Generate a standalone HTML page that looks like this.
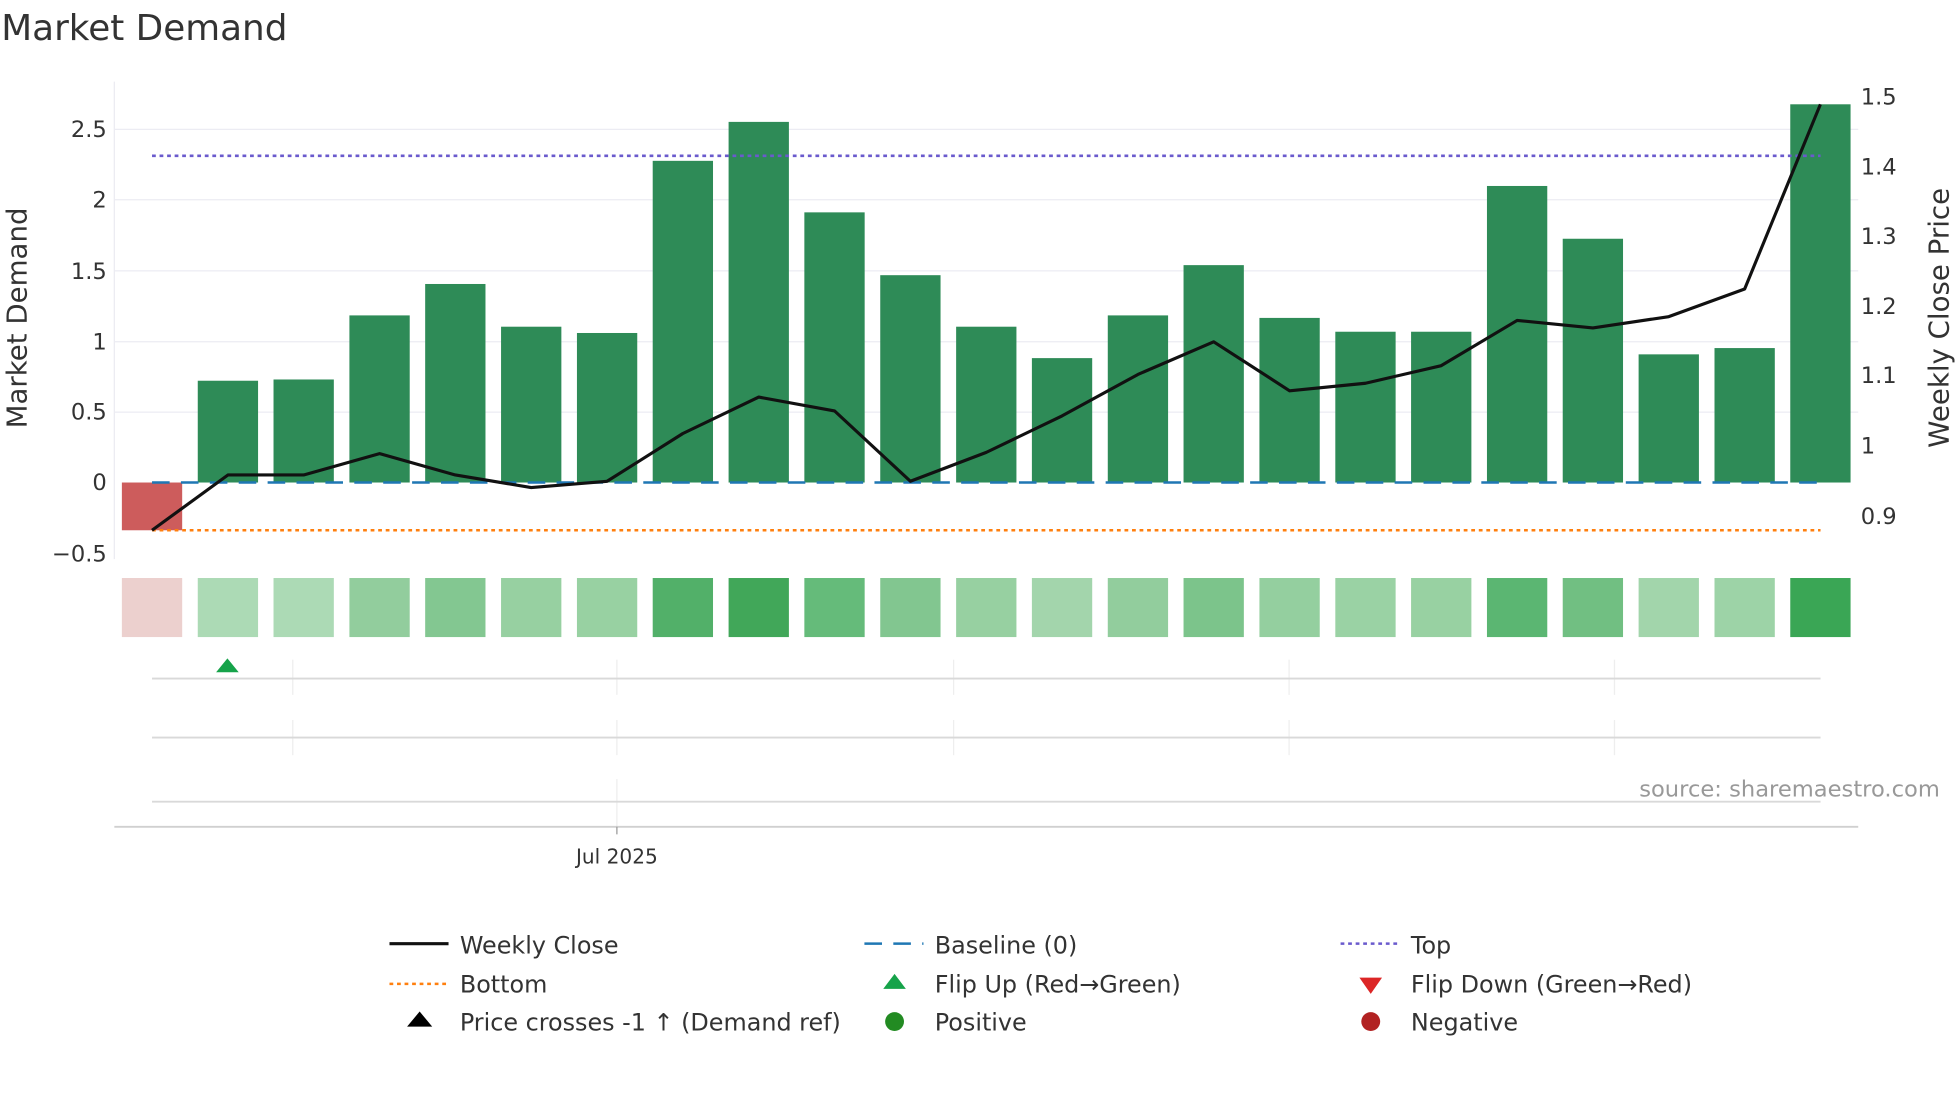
<!DOCTYPE html>
<html><head><meta charset="utf-8"><style>
html,body{margin:0;padding:0;background:#fff;}
svg{display:block;}
text{font-family:"DejaVu Sans","Liberation Sans",sans-serif;fill:#333;}
</style></head><body>
<svg width="1960" height="1102" viewBox="0 0 1560 877" preserveAspectRatio="none" xmlns="http://www.w3.org/2000/svg">
<text x="1" y="32" font-size="28.5">Market Demand</text>
<line x1="91" y1="65" x2="91" y2="445" stroke="#ebebf2" stroke-width="1"/>
<g stroke="#ececf3" stroke-width="1">
<line x1="91" y1="103" x2="1479" y2="103"/>
<line x1="91" y1="159" x2="1479" y2="159"/>
<line x1="91" y1="215.6" x2="1479" y2="215.6"/>
<line x1="91" y1="272" x2="1479" y2="272"/>
<line x1="91" y1="328" x2="1479" y2="328"/>
</g>
<g font-size="18" text-anchor="end">
<text x="85" y="109">2.5</text>
<text x="85" y="165">2</text>
<text x="85" y="222">1.5</text>
<text x="85" y="278">1</text>
<text x="85" y="334">0.5</text>
<text x="85" y="390">0</text>
<text x="85" y="447">−0.5</text>
</g>
<g font-size="18">
<text x="1481" y="83">1.5</text>
<text x="1481" y="139">1.4</text>
<text x="1481" y="194">1.3</text>
<text x="1481" y="250">1.2</text>
<text x="1481" y="305">1.1</text>
<text x="1481" y="361">1</text>
<text x="1481" y="417">0.9</text>
</g>
<text transform="translate(21,253) rotate(-90)" font-size="22" text-anchor="middle">Market Demand</text>
<text transform="translate(1551,253) rotate(-90)" font-size="22" text-anchor="middle">Weekly Close Price</text>
<g fill="#2e8b57">
<rect x="97" y="384" width="48" height="38" fill="#cd5c5c"/>
<rect x="157.4" y="303" width="48" height="81"/>
<rect x="217.7" y="302" width="48" height="82"/>
<rect x="278.1" y="251" width="48" height="133"/>
<rect x="338.4" y="226" width="48" height="158"/>
<rect x="398.8" y="260" width="48" height="124"/>
<rect x="459.2" y="265" width="48" height="119"/>
<rect x="519.5" y="128" width="48" height="256"/>
<rect x="579.9" y="97" width="48" height="287"/>
<rect x="640.2" y="169" width="48" height="215"/>
<rect x="700.6" y="219" width="48" height="165"/>
<rect x="761" y="260" width="48" height="124"/>
<rect x="821.3" y="285" width="48" height="99"/>
<rect x="881.7" y="251" width="48" height="133"/>
<rect x="942" y="211" width="48" height="173"/>
<rect x="1002.4" y="253" width="48" height="131"/>
<rect x="1062.8" y="264" width="48" height="120"/>
<rect x="1123.1" y="264" width="48" height="120"/>
<rect x="1183.5" y="148" width="48" height="236"/>
<rect x="1243.8" y="190" width="48" height="194"/>
<rect x="1304.2" y="282" width="48" height="102"/>
<rect x="1364.6" y="277" width="48" height="107"/>
<rect x="1424.9" y="83" width="48" height="301"/>
</g>
<line x1="121" y1="384" x2="1449" y2="384" stroke="#1f77b4" stroke-width="2" stroke-dasharray="14,9"/>
<line x1="121" y1="124" x2="1449" y2="124" stroke="#6a5acd" stroke-width="2" stroke-dasharray="3,3"/>
<line x1="121" y1="422" x2="1449" y2="422" stroke="#ff7f0e" stroke-width="2" stroke-dasharray="3,3"/>
<polyline fill="none" stroke="#111" stroke-width="2.5" stroke-linejoin="round" points="121,422 181.4,378 241.7,378 302.1,361 362.4,378 422.8,388 483.2,383 543.5,345 603.9,316 664.2,327 724.6,383 785,360 845.3,331 905.7,298 966,272 1026.4,311 1086.8,305 1147.1,291 1207.5,255 1267.8,261 1328.2,252 1388.6,230 1448.9,83"/>
<g>
<rect x="97" y="460" width="48" height="47" fill="#ecd0ce"/>
<rect x="157.4" y="460" width="48" height="47" fill="#acdab5"/>
<rect x="217.7" y="460" width="48" height="47" fill="#acdab5"/>
<rect x="278.1" y="460" width="48" height="47" fill="#92cd9d"/>
<rect x="338.4" y="460" width="48" height="47" fill="#83c791"/>
<rect x="398.8" y="460" width="48" height="47" fill="#97d0a1"/>
<rect x="459.2" y="460" width="48" height="47" fill="#98d1a2"/>
<rect x="519.5" y="460" width="48" height="47" fill="#52b069"/>
<rect x="579.9" y="460" width="48" height="47" fill="#41a759"/>
<rect x="640.2" y="460" width="48" height="47" fill="#65bb7a"/>
<rect x="700.6" y="460" width="48" height="47" fill="#82c690"/>
<rect x="761" y="460" width="48" height="47" fill="#97d0a1"/>
<rect x="821.3" y="460" width="48" height="47" fill="#a3d5ac"/>
<rect x="881.7" y="460" width="48" height="47" fill="#92cd9d"/>
<rect x="942" y="460" width="48" height="47" fill="#7cc48b"/>
<rect x="1002.4" y="460" width="48" height="47" fill="#94cf9f"/>
<rect x="1062.8" y="460" width="48" height="47" fill="#9ad2a4"/>
<rect x="1123.1" y="460" width="48" height="47" fill="#98d1a2"/>
<rect x="1183.5" y="460" width="48" height="47" fill="#5bb672"/>
<rect x="1243.8" y="460" width="48" height="47" fill="#71bf82"/>
<rect x="1304.2" y="460" width="48" height="47" fill="#a2d5ab"/>
<rect x="1364.6" y="460" width="48" height="47" fill="#9dd3a7"/>
<rect x="1424.9" y="460" width="48" height="47" fill="#3aa655"/>
</g>
<g stroke="#eeeeee" stroke-width="1">
<line x1="233" y1="525" x2="233" y2="553"/><line x1="491" y1="525" x2="491" y2="553"/><line x1="759" y1="525" x2="759" y2="553"/><line x1="1026" y1="525" x2="1026" y2="553"/><line x1="1285" y1="525" x2="1285" y2="553"/>
<line x1="233" y1="573" x2="233" y2="601"/><line x1="491" y1="573" x2="491" y2="601"/><line x1="759" y1="573" x2="759" y2="601"/><line x1="1026" y1="573" x2="1026" y2="601"/><line x1="1285" y1="573" x2="1285" y2="601"/>
<line x1="491" y1="620" x2="491" y2="658"/>
</g>
<g stroke="#d9d9d9" stroke-width="1.5">
<line x1="121" y1="540" x2="1449" y2="540"/>
<line x1="121" y1="587" x2="1449" y2="587"/>
<line x1="121" y1="638" x2="1449" y2="638"/>
</g>
<line x1="91" y1="658" x2="1479" y2="658" stroke="#d0d0d0" stroke-width="1.5"/>
<line x1="491" y1="658" x2="491" y2="664" stroke="#999" stroke-width="1"/>
<polygon points="181,524 172,535 190,535" fill="#16a34a"/>
<text x="491" y="687" font-size="16" text-anchor="middle">Jul 2025</text>
<text x="1544" y="634" font-size="18" text-anchor="end" style="fill:#999">source: sharemaestro.com</text>
<g font-size="19">
<line x1="310" y1="751" x2="357" y2="751" stroke="#111" stroke-width="2.5"/>
<text x="366" y="759">Weekly Close</text>
<line x1="310" y1="783" x2="357" y2="783" stroke="#ff7f0e" stroke-width="2" stroke-dasharray="3,3"/>
<text x="366" y="790">Bottom</text>
<polygon points="334,805 324,817 344,817" fill="#000"/>
<text x="366" y="820">Price crosses -1 ↑ (Demand ref)</text>
<line x1="688" y1="751" x2="735" y2="751" stroke="#1f77b4" stroke-width="2" stroke-dasharray="14,9"/>
<text x="744" y="759">Baseline (0)</text>
<polygon points="712,775 703,787 721,787" fill="#16a34a"/>
<text x="744" y="790">Flip Up (Red→Green)</text>
<circle cx="712" cy="813" r="7.5" fill="#228b22"/>
<text x="744" y="820">Positive</text>
<line x1="1067" y1="751" x2="1114" y2="751" stroke="#6a5acd" stroke-width="2" stroke-dasharray="3,3"/>
<text x="1123" y="759">Top</text>
<polygon points="1082,778 1100,778 1091,791" fill="#dc2626"/>
<text x="1123" y="790">Flip Down (Green→Red)</text>
<circle cx="1091" cy="813" r="7.5" fill="#b22222"/>
<text x="1123" y="820">Negative</text>
</g>
</svg>
</body></html>
